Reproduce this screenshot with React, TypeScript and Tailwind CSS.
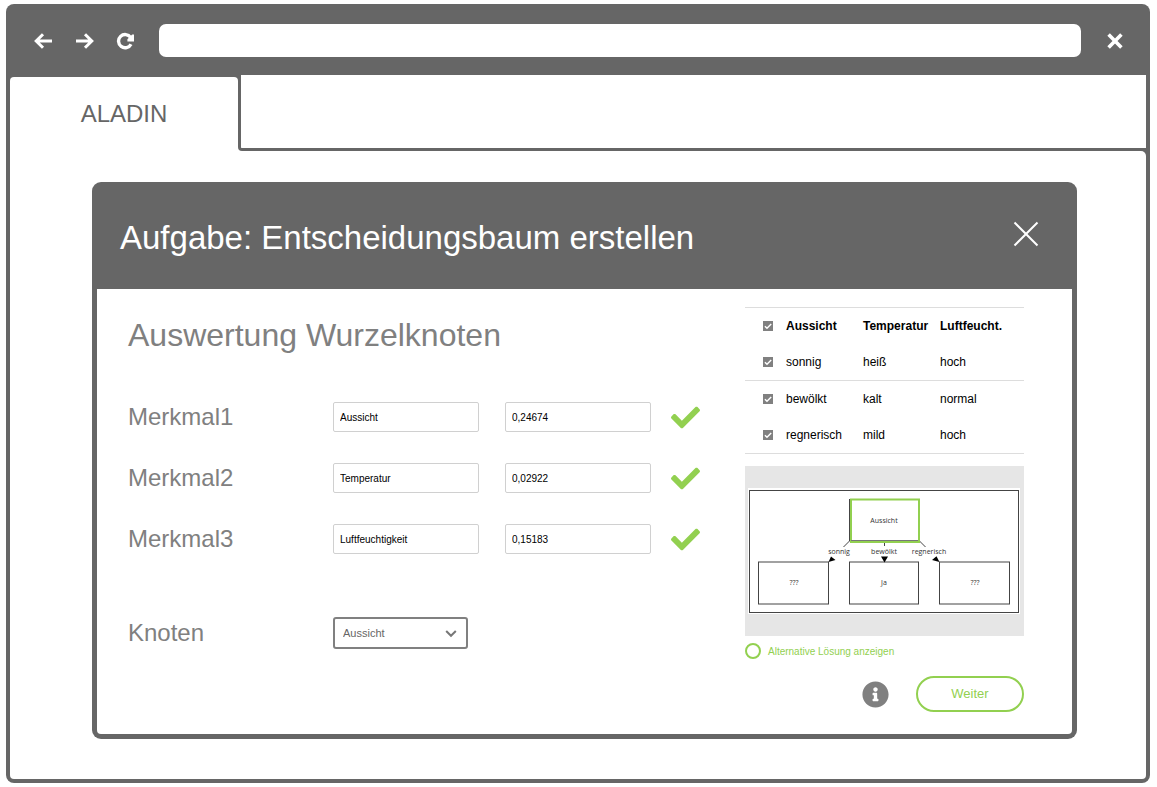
import { useState } from "react";
import { FaCheck, FaInfoCircle } from "react-icons/fa";

const features = [
  { label: "Merkmal1", name: "Aussicht", value: "0,24674" },
  { label: "Merkmal2", name: "Temperatur", value: "0,02922" },
  { label: "Merkmal3", name: "Luftfeuchtigkeit", value: "0,15183" },
];

const samples = [
  ["sonnig", "heiß", "hoch"],
  ["bewölkt", "kalt", "normal"],
  ["regnerisch", "mild", "hoch"],
];

function BrowserBar() {
  return (
    <header className="flex h-[67px] items-center pb-0.5 pl-6 pr-[22px] text-white">
      <nav className="flex items-center gap-[21px]" aria-label="Browser">
        <button type="button" aria-label="Zurück">
          <svg width="20" height="18" viewBox="0 0 20 18" fill="none" stroke="currentColor" strokeWidth="3">
            <path d="M18 9H3M9 2.2 2.2 9l6.800 6.800" />
          </svg>
        </button>
        <button type="button" aria-label="Vor">
          <svg width="20" height="18" viewBox="0 0 20 18" fill="none" stroke="currentColor" strokeWidth="3">
            <path d="M1 9h15M10 2.2 16.800 9l-6.800 6.800" />
          </svg>
        </button>
        <button type="button" aria-label="Neu laden">
          <svg width="20" height="18" viewBox="0 0 20 18">
            <path d="M14.600 5.400A6.600 6.600 0 1 0 15 12.200" fill="none" stroke="currentColor" strokeWidth="3.400" />
            <path d="M18 2.600v6.800h-6.600v-2.200l4.800-4.600z" fill="currentColor" />
          </svg>
        </button>
      </nav>
      <input
        type="text"
        aria-label="Adresse"
        className="ml-[23px] h-[33px] min-w-0 flex-1 rounded-[7px] bg-white px-3 text-sm text-[#666] outline-none"
      />
      <button type="button" aria-label="Fenster schließen" className="ml-[25px]">
        <svg width="18" height="18" viewBox="0 0 18 18" fill="none" stroke="currentColor" strokeWidth="3.600">
          <path d="m2.600 2.600 12.800 12.800M15.400 2.600 2.600 15.400" />
        </svg>
      </button>
    </header>
  );
}

function Tick({ id, label }: { id: string; label: string }) {
  return (
    <span className="relative mx-auto block size-[10px]">
      <input
        id={id}
        type="checkbox"
        defaultChecked
        aria-label={label}
        className="peer block size-[10px] appearance-none bg-[#ccc] checked:bg-[#808080]"
      />
      <svg
        className="pointer-events-none absolute inset-0 hidden peer-checked:block"
        width="10"
        height="10"
        viewBox="0 0 10 10"
        fill="none"
        stroke="#fff"
        strokeWidth="1.400"
      >
        <path d="m1.900 5.200 2.100 2.100 4.200-4.300" />
      </svg>
    </span>
  );
}

function SampleTable() {
  return (
    <table className="w-full table-fixed border-collapse text-left text-[12px] leading-4 text-black">
      <colgroup>
        <col className="w-[41px]" />
        <col className="w-[77px]" />
        <col className="w-[77px]" />
        <col />
      </colgroup>
      <thead>
        <tr className="h-[37px] border-t border-[#ddd]">
          <td className="pl-1">
            <Tick id="all" label="Alle auswählen" />
          </td>
          <th scope="col">Aussicht</th>
          <th scope="col">Temperatur</th>
          <th scope="col">Luftfeucht.</th>
        </tr>
      </thead>
      <tbody>
        {samples.map((row, i) => (
          <tr key={row[0]} className={i === 1 ? "h-[37px]" : "h-9 border-b border-[#ddd]"}>
            <td className="pl-1">
              <Tick id={`sample-${i}`} label={row[0]} />
            </td>
            {row.map((cell, j) => (
              <td key={j}>{cell}</td>
            ))}
          </tr>
        ))}
      </tbody>
    </table>
  );
}

function TreeDiagram() {
  return (
    <div className="mt-3 flex h-[170px] bg-[#e6e6e6] pl-[3px] pt-[22px]">
      <svg
        width="272"
        height="126"
        viewBox="0 0 272 126"
        fontFamily="'Open Sans', sans-serif"
        fontSize="7"
        textAnchor="middle"
        role="img"
        aria-label="Entscheidungsbaum"
      >
        <rect width="272" height="126" fill="#fff" />
        <g fill="none" stroke="#444" strokeWidth="1">
          <rect x="1.500" y="2.500" width="269" height="122" />
          <rect x="10.500" y="74" width="70" height="42" />
          <rect x="101.500" y="74" width="69" height="42" />
          <rect x="191.500" y="74" width="70" height="42" />
          <path d="M101.500 11v42M101.500 53l-6 6M136.500 53v5M171.500 53l6 6" />
        </g>
        <rect x="103" y="11.500" width="68" height="42.500" fill="#fff" stroke="#92d050" strokeWidth="2" />
        <path d="M103 52.500h67" stroke="#777" />
        <g fill="#000">
          <path d="M80.500 74l2.500-5.500 4.500 3.500zM133 68.500h7l-3.500 6zM191.500 74l-7.500-2 4.500-3.800z" />
        </g>
        <g fill="#333">
          <text x="136" y="35">Aussicht</text>
          <text x="91" y="66">sonnig</text>
          <text x="136" y="66">bewölkt</text>
          <text x="181" y="66">regnerisch</text>
          <text x="46" y="97">???</text>
          <text x="136" y="97">Ja</text>
          <text x="227" y="97">???</text>
        </g>
      </svg>
    </div>
  );
}

function FeatureForm() {
  const [node, setNode] = useState("Aussicht");
  const field =
    "h-[30px] w-[146px] rounded-[2px] border border-[#d0d0d0] bg-white px-1.5 text-[10px] text-black outline-none";
  return (
    <section className="min-w-0 flex-1 pt-[26px] text-[#808080]">
      <h2 className="text-[32px] leading-10">Auswertung Wurzelknoten</h2>
      <div className="mt-[47px] flex flex-col gap-[31px]">
        {features.map((f, i) => (
          <div key={f.label} className="flex h-[30px] items-center">
            <label htmlFor={`feature-${i}`} className="w-[205px] text-2xl leading-[30px]">
              {f.label}
            </label>
            <input id={`feature-${i}`} type="text" defaultValue={f.name} className={field} />
            <input
              type="text"
              aria-label={`${f.label} Wert`}
              defaultValue={f.value}
              className={`${field} ml-[26px]`}
            />
            <FaCheck className="ml-5 shrink-0 text-[#92d050]" size={29} />
          </div>
        ))}
      </div>
      <div className="mt-[63px] flex h-8 items-center">
        <label htmlFor="node" className="w-[205px] text-2xl leading-[30px]">
          Knoten
        </label>
        <div className="relative">
          <select
            id="node"
            value={node}
            onChange={(e) => setNode(e.target.value)}
            className="block h-8 w-[135px] appearance-none rounded-[3px] border-2 border-[#808080] bg-white pl-2 pr-8 text-[11px] text-[#666] outline-none"
          >
            {features.map((f) => (
              <option key={f.name}>{f.name}</option>
            ))}
          </select>
          <svg
            className="pointer-events-none absolute right-[11px] top-3"
            width="12"
            height="9"
            viewBox="0 0 12 9"
            fill="none"
            stroke="#777"
            strokeWidth="2"
          >
            <path d="m1.200 2 4.800 4.800L10.800 2" />
          </svg>
        </div>
      </div>
    </section>
  );
}

function TaskDialog() {
  return (
    <article className="ml-[82px] mr-[69px] rounded-[9px] bg-[#666] px-[5px] pb-[5px]">
      <header className="flex h-[107px] items-center justify-between pl-[23px] pr-[33px] text-white">
        <h1 className="pt-1 text-[33px] leading-10">Aufgabe: Entscheidungsbaum erstellen</h1>
        <button type="button" aria-label="Schließen" className="pb-1">
          <svg width="26" height="26" viewBox="0 0 26 26" fill="none" stroke="currentColor" strokeWidth="2">
            <path d="m1.500 1.500 23 23M24.500 1.500l-23 23" />
          </svg>
        </button>
      </header>
      <div className="flex rounded-b-[4px] bg-white pb-[22px] pl-[31px] pr-12">
        <FeatureForm />
        <aside className="w-[279px] shrink-0 pt-[18px]">
          <SampleTable />
          <TreeDiagram />
          <label className="mt-[7px] flex h-4 items-center text-[10px] leading-4 text-[#92d050]">
            <input
              type="radio"
              name="alternative"
              className="mr-[7px] size-4 appearance-none rounded-full border-2 border-[#92d050] checked:bg-[#92d050]"
            />
            <span className="pt-0.5">Alternative Lösung anzeigen</span>
          </label>
          <div className="mt-[17px] flex items-center justify-end gap-[27px]">
            <button type="button" aria-label="Information" className="text-[#808080]">
              <FaInfoCircle size={27} />
            </button>
            <button
              type="button"
              className="h-9 w-[108px] rounded-full border-2 border-[#92d050] text-[13px] text-[#92d050]"
            >
              Weiter
            </button>
          </div>
        </aside>
      </div>
    </article>
  );
}

export default function App() {
  return (
    <div className="min-h-screen bg-white pb-1 pl-1.5 pr-[7px] pt-1 font-['Liberation_Sans',Arial,sans-serif]">
      <div className="rounded-lg bg-[#666] p-1">
        <BrowserBar />
        <div className="flex h-[76px] bg-white">
          <div className="w-[228px] bg-[#666] pt-0.5">
            <button
              type="button"
              className="block size-full rounded-t-[4px] bg-white text-2xl text-[#666]"
            >
              ALADIN
            </button>
          </div>
          <div className="flex-1 rounded-bl-[4px] border-b-[3px] border-l-[3px] border-[#666]" />
        </div>
        <main className="rounded-b-[4px] rounded-tr-[5px] bg-white pb-10 pt-[31px]">
          <TaskDialog />
        </main>
      </div>
    </div>
  );
}
